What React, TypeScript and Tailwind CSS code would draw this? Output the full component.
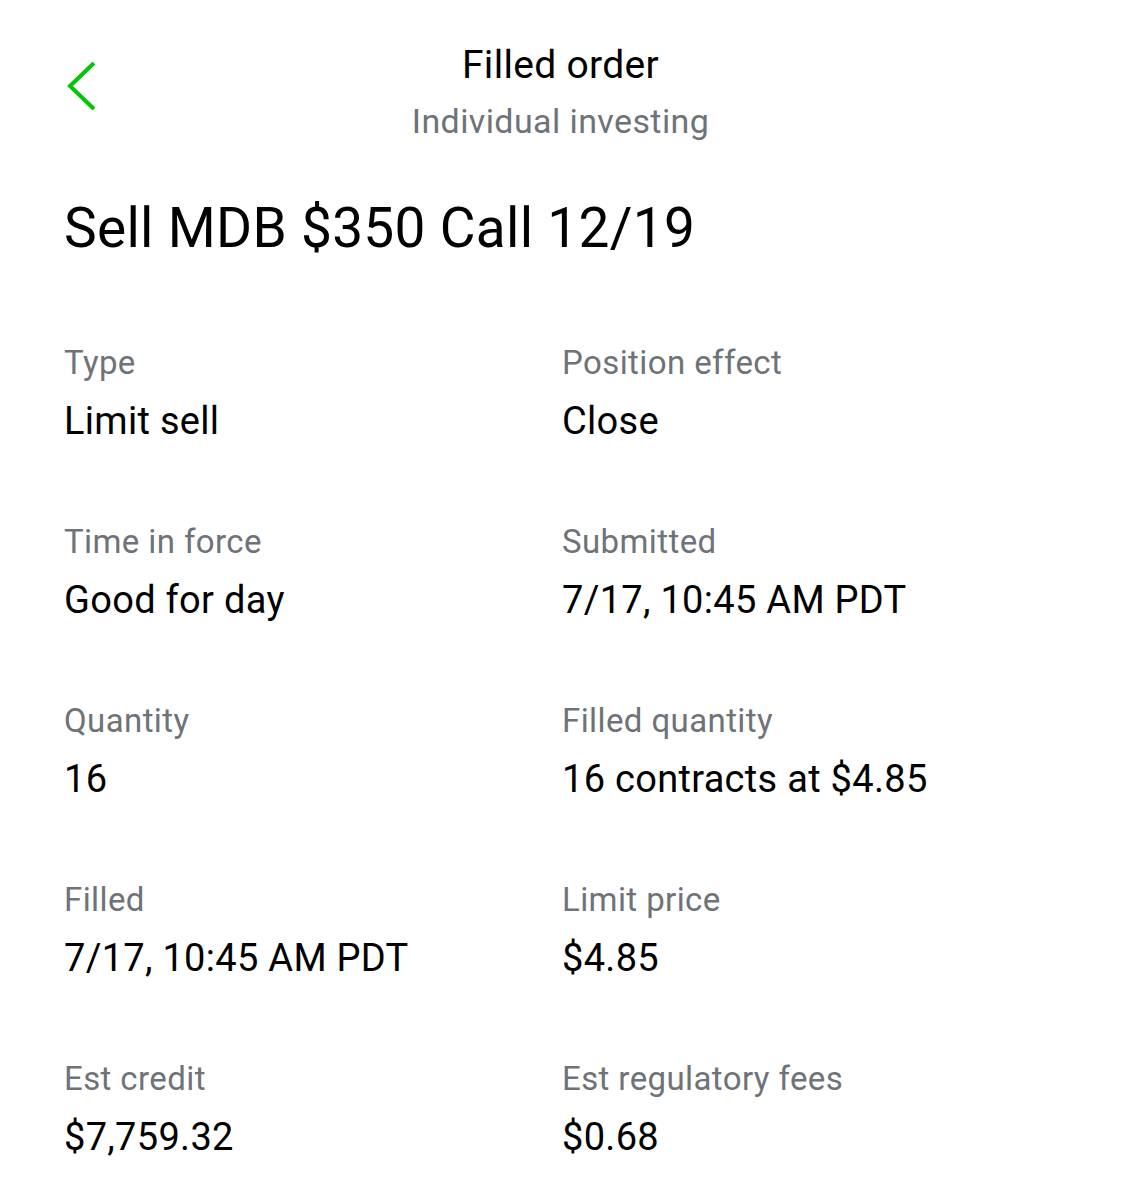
import React from "react";

const rows: [string, string, string, string][] = [
  ["Type", "Limit sell", "Position effect", "Close"],
  ["Time in force", "Good for day", "Submitted", "7/17, 10:45 AM PDT"],
  ["Quantity", "16", "Filled quantity", "16 contracts at $4.85"],
  ["Filled", "7/17, 10:45 AM PDT", "Limit price", "$4.85"],
  ["Est credit", "$7,759.32", "Est regulatory fees", "$0.68"],
];

function Field({ label, value }: { label: string; value: string }) {
  return (
    <div className="flex flex-col">
      <p className="text-[33px] leading-[38px] tracking-[0.4px] text-[#6e7378]">{label}</p>
      <p className="mt-[18px] text-[38px] leading-[42px] tracking-[0.3px] text-black">{value}</p>
    </div>
  );
}

export default function App() {
  return (
    <div
      className="w-[1121px] h-[1200px] bg-white overflow-hidden"
      style={{ fontFamily: "Roboto, 'Liberation Sans', sans-serif" }}
    >
      {/* Header */}
      <div className="relative flex flex-col items-center pt-[42px]">
        <button className="absolute left-[64px] top-[60px] text-[#00c805]">
          <svg width="34" height="52" viewBox="0 0 34 52" fill="none">
            <path d="M30 3 L6 26 L30 49" stroke="currentColor" strokeWidth="4" strokeLinecap="butt" />
          </svg>
        </button>
        <p className="text-[39px] leading-[46px] tracking-[0.3px] text-black">Filled order</p>
        <p className="mt-[14px] text-[34px] leading-[38px] tracking-[0.4px] text-[#6e7378]">Individual investing</p>
      </div>

      {/* Title */}
      <h1 className="px-[64px] mt-[58px] text-[55px] leading-[60px] tracking-[0.3px] text-black">
        Sell MDB $350 Call 12/19
      </h1>

      {/* Details */}
      <div className="px-[64px] mt-[86px] flex flex-col gap-[81px]">
        {rows.map(([l1, v1, l2, v2]) => (
          <div key={l1} className="grid grid-cols-[498px_1fr]">
            <Field label={l1} value={v1} />
            <Field label={l2} value={v2} />
          </div>
        ))}
      </div>
    </div>
  );
}
